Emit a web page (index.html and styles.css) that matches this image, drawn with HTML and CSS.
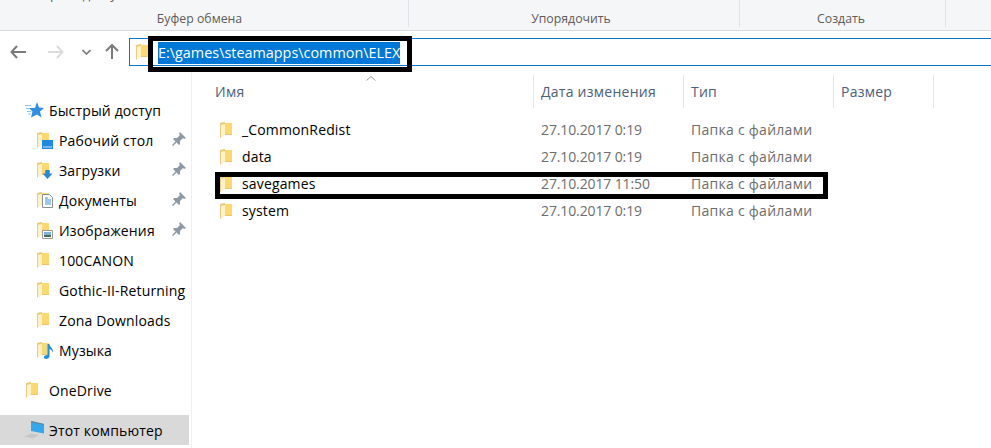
FILE: index.html
```html
<!DOCTYPE html>
<html lang="ru">
<head>
<meta charset="utf-8">
<title>ELEX</title>
<link rel="stylesheet" href="styles.css">
</head>
<body>
<svg class="defs" width="0" height="0" aria-hidden="true">
  <symbol id="folder" viewBox="0 0 12 16">
    <path d="M4 1h8v12H4z" fill="#fbd970"/>
    <path d="M0 1l5-1v13l-5 3z" fill="#fef3c8"/>
    <path d="M0 1l5-1v2L0 3z" fill="#eccb78"/>
    <path d="M.5 1v14.500" stroke="#e8cd8a" stroke-width="1" fill="none"/>
    <path d="M5 12h7v1H5z" fill="#eec56a"/>
  </symbol>
  <symbol id="pin" viewBox="0 0 14 14">
    <path d="M8 0l6 6-2 1-1-1-3 3 0 3-1 1-2.500-2.500L1 14 0 13l3.500-3.500L1 7l1-1 3 0 3-3-1-1z" fill="#8d9aa6"/>
  </symbol>
</svg>

<div class="app">
  <header class="ribbon">
    <div class="group group-clip"><span class="cut">быстрого доступа</span><span class="label">Буфер обмена</span></div>
    <div class="group group-org"><span class="label">Упорядочить</span></div>
    <div class="group group-new"><span class="label">Создать</span></div>
  </header>

  <div class="addressbar">
    <div class="navbtns">
      <svg class="btn back" viewBox="0 0 16 14"><path d="M7 1L1.500 7 7 13M2 7h14" fill="none" stroke="#7a7a7a" stroke-width="2"/></svg>
      <svg class="btn forward" viewBox="0 0 16 14"><path d="M9 1l5.500 6L9 13M14 7H0" fill="none" stroke="#dcdcdc" stroke-width="2"/></svg>
      <svg class="btn chevron" viewBox="0 0 9 6"><path d="M.5 1l4 4 4-4" fill="none" stroke="#7a7a7a" stroke-width="1.700"/></svg>
      <svg class="btn up" viewBox="0 0 14 15"><path d="M1 7l6-6 6 6M7 1.500V15" fill="none" stroke="#7a7a7a" stroke-width="2"/></svg>
    </div>
    <div class="address">
      <svg class="ficon"><use href="#folder"/></svg>
      <span class="path">E:\games\steamapps\common\ELEX</span>
    </div>
  </div>

  <main class="main">
    <nav class="tree">
      <div class="item top">
        <svg class="ico star" viewBox="0 0 19 16"><path d="M12 0l2 5.500 5 .5-4 3.500 1.500 6L12 12.500 6 15.500l1.500-6L4 6h6z" fill="#2e8fe6"/><path d="M0 3.500h6M1 6.500h4M2 9.500h4M3 12h3" stroke="#8cc3f0" stroke-width="1"/></svg>
        <span>Быстрый доступ</span>
      </div>
      <div class="item sub">
        <span class="stack"><svg class="ficon"><use href="#folder"/></svg><svg class="badge" viewBox="0 0 11 9"><path d="M0 0h11v9H0z" fill="#1d8ae0"/><path d="M1 7h9" stroke="#cfe6f8"/></svg></span>
        <span>Рабочий стол</span><svg class="pin"><use href="#pin"/></svg>
      </div>
      <div class="item sub">
        <span class="stack"><svg class="ficon"><use href="#folder"/></svg><svg class="badge" viewBox="0 0 11 10"><path d="M3 0h5v4h3l-5.500 6L0 4h3z" fill="#2b86d8"/></svg></span>
        <span>Загрузки</span><svg class="pin"><use href="#pin"/></svg>
      </div>
      <div class="item sub">
        <span class="stack"><svg class="ficon"><use href="#folder"/></svg><svg class="badge doc" viewBox="0 0 11 14"><path d="M.5.500h7l3 3v10H.5z" fill="#fff" stroke="#8a8f94"/><path d="M3 4h3M3 6h6M3 8h6M3 10h6" stroke="#3a8fd8"/></svg></span>
        <span>Документы</span><svg class="pin"><use href="#pin"/></svg>
      </div>
      <div class="item sub">
        <span class="stack"><svg class="ficon"><use href="#folder"/></svg><svg class="badge" viewBox="0 0 11 9"><path d="M.5.500h10v8H.5z" fill="#fff" stroke="#9a9a9a"/><path d="M2 2h7v3H2z" fill="#7fb2de"/><path d="M2 5h7v2H2z" fill="#4b6a5a"/></svg></span>
        <span>Изображения</span><svg class="pin"><use href="#pin"/></svg>
      </div>
      <div class="item sub"><span class="stack"><svg class="ficon"><use href="#folder"/></svg></span><span>100CANON</span></div>
      <div class="item sub"><span class="stack"><svg class="ficon"><use href="#folder"/></svg></span><span>Gothic-II-Returning</span></div>
      <div class="item sub"><span class="stack"><svg class="ficon"><use href="#folder"/></svg></span><span>Zona Downloads</span></div>
      <div class="item sub">
        <span class="stack"><svg class="ficon"><use href="#folder"/></svg><svg class="badge note" viewBox="0 0 9 15"><path d="M3.500 0h2c0 3 4 4 3.500 8.500-.8-2-2-3-3.500-3.500V12c0 2-2 3-3.500 3S0 14 0 13s1.500-2.200 3.500-2z" fill="#1a8fe8"/></svg></span>
        <span>Музыка</span>
      </div>
      <div class="item top gap"><span class="stack"><svg class="ficon"><use href="#folder"/></svg></span><span>OneDrive</span></div>
      <div class="item top gap selected comp">
        <svg class="ico pc" viewBox="0 0 21 18"><path d="M7 0l13 3v9.500L7 10z" fill="#34a6ee"/><path d="M7 0l13 3v1L7 1z" fill="#6c7f8c"/><path d="M0 15.500l7-3 8 1.500-6 3.500z" fill="#c4c8cb"/></svg>
        <span>Этот компьютер</span>
      </div>
    </nav>

    <section class="files">
      <div class="cols head">
        <div class="hcell first">Имя<svg class="caret" viewBox="0 0 10 5"><path d="M.5 4.500L5 .5l4.500 4" fill="none" stroke="#9aa0a6"/></svg></div>
        <div class="hcell">Дата изменения</div>
        <div class="hcell">Тип</div>
        <div class="hcell last">Размер</div>
      </div>
      <div class="cols row"><div class="name"><svg class="ficon"><use href="#folder"/></svg><span>_CommonRedist</span></div><div class="cell date">27.10.2017 0:19</div><div class="cell type">Папка с файлами</div></div>
      <div class="cols row"><div class="name"><svg class="ficon"><use href="#folder"/></svg><span>data</span></div><div class="cell date">27.10.2017 0:19</div><div class="cell type">Папка с файлами</div></div>
      <div class="cols row"><div class="name"><svg class="ficon"><use href="#folder"/></svg><span>savegames</span></div><div class="cell date">27.10.2017 11:50</div><div class="cell type">Папка с файлами</div></div>
      <div class="cols row"><div class="name"><svg class="ficon"><use href="#folder"/></svg><span>system</span></div><div class="cell date">27.10.2017 0:19</div><div class="cell type">Папка с файлами</div></div>
    </section>
  </main>

  <div class="mark mark-path"></div>
  <div class="mark mark-row"></div>
</div>
</body>
</html>
```
FILE: styles.css
```css
* { box-sizing: border-box; }
html, body { margin: 0; padding: 0; background: #fff; overflow: hidden; }
body { font-family: "Open Sans", "Noto Sans", sans-serif; font-size: 14px; color: #000; }
.defs { position: absolute; }
.app { position: relative; width: 991px; height: 448px; overflow: hidden; }

.ribbon { display: flex; height: 31px; background: #f5f6f7; border-bottom: 1px solid #dadbdc; overflow: hidden; }
.group { height: 27px; border-right: 1px solid #e1e3e6; display: flex; justify-content: center; align-items: flex-end; position: relative; font-size: 12.3px; color: #5c5c5c; }
.group-clip { width: 409px; padding-right: 9px; }
.group-org { width: 331px; padding-right: 6px; }
.group-new { width: 206px; padding-right: 3px; }
.label { line-height: 18px; margin-bottom: -1px; }
.cut { position: absolute; left: 20px; top: -15px; line-height: 18px; font-size: 13px; }

.addressbar { display: flex; height: 41px; padding-top: 7px; }
.navbtns { width: 129px; display: flex; align-items: center; padding-left: 10px; height: 27px; }
.btn { display: block; }
.back { width: 16px; height: 14px; }
.forward { width: 16px; height: 14px; margin-left: 22px; }
.chevron { width: 9px; height: 6px; margin-left: 18px; }
.up { width: 14px; height: 15px; margin-left: 14px; }
.address { flex: 1; margin-right: -2px; height: 28px; border: 1px solid #0078d7; display: flex; align-items: center; padding-left: 6px; }
.ficon { width: 12px; height: 16px; display: block; flex: none; }
.path { margin-left: 10px; background: #0078d7; color: #fff; font-size: 14.4px; line-height: 22px; height: 22px; white-space: nowrap; position: relative; top: 1px; }

.main { display: flex; height: 376px; }
.tree { width: 192px; flex: none; border-right: 1px solid #f0f0f0; padding-top: 23px; letter-spacing: .15px; }
.item { height: 30px; display: flex; align-items: center; white-space: nowrap; width: 189px; position: relative; }
.top { padding-left: 25px; }
.top .stack { margin-left: 1px; }
.sub { padding-left: 37px; }
.gap { margin-top: 10px; }
.selected { background: #d9d9d9; }
.comp { padding-left: 24px; }
.stack { position: relative; width: 22px; height: 16px; flex: none; display: block; }
.top .stack { width: 23px; }
.ico { flex: none; display: block; }
.star { width: 19px; height: 16px; margin-right: 5px; }
.pc { width: 21px; height: 18px; margin-right: 4px; }
.badge { position: absolute; left: 5px; top: 8px; width: 11px; height: 9px; }
.badge.doc { top: 2px; height: 14px; }
.badge.note { left: 7px; top: 2px; width: 9px; height: 15px; }
.pin { position: absolute; left: 172px; top: 7px; width: 14px; height: 14px; }

.files { flex: 1; padding-left: 16px; }
.cols { display: grid; grid-template-columns: 325px 150px 150px 101px; }
.head { height: 32px; margin-top: 3px; margin-bottom: 9px; color: #4c607a; letter-spacing: .25px; }
.hcell { border-left: 1px solid #e5e5e5; padding-left: 7px; line-height: 33px; position: relative; }
.hcell.first { border-left: 0; }
.hcell.last { border-right: 1px solid #e5e5e5; }
.caret { position: absolute; left: 158px; top: 1px; width: 10px; height: 5px; display: block; }
.row { height: 27px; align-items: center; }
.name { display: flex; align-items: center; padding-left: 12px; gap: 10px; color: #000; letter-spacing: .15px; }
.cell { padding-left: 8px; color: #6d6d6d; white-space: nowrap; }
.date { letter-spacing: -.12px; }
.type { letter-spacing: .27px; }

.mark { position: absolute; border: 5px solid #000; }
.mark-path { left: 148px; top: 36px; width: 264px; height: 36px; }
.mark-row { left: 215px; top: 172px; width: 613px; height: 27px; }
```
